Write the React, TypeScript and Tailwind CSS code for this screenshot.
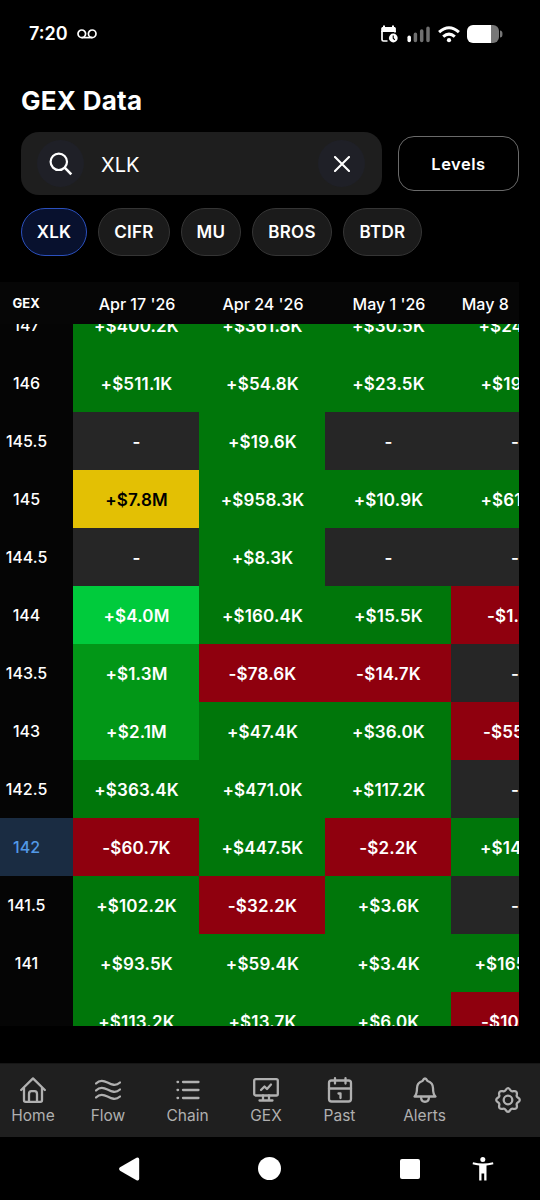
import React from "react";

const tones: Record<string, string> = {
  g: "bg-[#00760a] text-white",
  d: "bg-[#262626] text-white",
  r: "bg-[#8f000e] text-white",
  y: "bg-[#e3c004] text-black",
  b: "bg-[#00cb3c] text-white",
  m: "bg-[#029717] text-white",
};

type Row = { strike: string; active?: boolean; cells: [string, string][]; lastPad: string };

const rows: Row[] = [
  { strike: "147", cells: [["g", "+$400.2K"], ["g", "+$361.8K"], ["g", "+$30.5K"], ["g", "+$24"]], lastPad: "pl-[27.5px]" },
  { strike: "146", cells: [["g", "+$511.1K"], ["g", "+$54.8K"], ["g", "+$23.5K"], ["g", "+$19"]], lastPad: "pl-[29.5px]" },
  { strike: "145.5", cells: [["d", "-"], ["g", "+$19.6K"], ["d", "-"], ["d", "-"]], lastPad: "pl-[60px]" },
  { strike: "145", cells: [["y", "+$7.8M"], ["g", "+$958.3K"], ["g", "+$10.9K"], ["g", "+$61"]], lastPad: "pl-[29.5px]" },
  { strike: "144.5", cells: [["d", "-"], ["g", "+$8.3K"], ["d", "-"], ["d", "-"]], lastPad: "pl-[60px]" },
  { strike: "144", cells: [["b", "+$4.0M"], ["g", "+$160.4K"], ["g", "+$15.5K"], ["r", "-$1."]], lastPad: "pl-[36px]" },
  { strike: "143.5", cells: [["m", "+$1.3M"], ["r", "-$78.6K"], ["r", "-$14.7K"], ["d", "-"]], lastPad: "pl-[60px]" },
  { strike: "143", cells: [["m", "+$2.1M"], ["g", "+$47.4K"], ["g", "+$36.0K"], ["r", "-$55"]], lastPad: "pl-[32px]" },
  { strike: "142.5", cells: [["g", "+$363.4K"], ["g", "+$471.0K"], ["g", "+$117.2K"], ["d", "-"]], lastPad: "pl-[60px]" },
  { strike: "142", active: true, cells: [["r", "-$60.7K"], ["g", "+$447.5K"], ["r", "-$2.2K"], ["g", "+$14"]], lastPad: "pl-[29px]" },
  { strike: "141.5", cells: [["g", "+$102.2K"], ["r", "-$32.2K"], ["g", "+$3.6K"], ["d", "-"]], lastPad: "pl-[60px]" },
  { strike: "141", cells: [["g", "+$93.5K"], ["g", "+$59.4K"], ["g", "+$3.4K"], ["g", "+$165"]], lastPad: "pl-[23.5px]" },
  { strike: "", cells: [["g", "+$113.2K"], ["g", "+$13.7K"], ["g", "+$6.0K"], ["r", "-$10"]], lastPad: "pl-[30px]" },
];

function StatusBar() {
  return (
    <div className="flex h-[68px] shrink-0 items-center pl-[29px] pr-[37px]">
      <span className="text-[18px] font-semibold leading-none">7:20</span>
      <svg className="ml-[9px]" width="20" height="10" viewBox="0 0 20 10" fill="none" stroke="#fff" strokeWidth="1.7">
        <circle cx="4.8" cy="4.8" r="3.8" />
        <circle cx="15.2" cy="4.8" r="3.8" />
        <path d="M4.8 8.6H15.2" />
      </svg>
      <svg className="ml-auto" width="18" height="18" viewBox="0 0 18 18" fill="none">
        <path d="M2 6V14.5C2 15.5 2.5 16 3.5 16H7.5M15 6V7.5" stroke="#fff" strokeWidth="1.7" />
        <path d="M1.2 7V3.5C1.2 2.5 2 1.9 3 1.9V0.4H5V1.9H12V0.4H14V1.9C15.2 1.9 15.9 2.6 15.9 3.6V7Z" fill="#fff" />
        <circle cx="13.3" cy="13" r="4.4" fill="#fff" />
        <path d="M13.2 10.6V13.2L14.8 14.8" stroke="#000" strokeWidth="1.1" />
      </svg>
      <svg className="ml-[8px]" width="24" height="17" viewBox="0 0 24 17" strokeWidth="3.5" strokeLinecap="round">
        <path d="M3.2 11.3V14.6" stroke="#fff" />
        <path d="M9.4 8.2V14.6M15.7 5.1V14.6M22 2.2V14.6" stroke="#6f6f6f" />
      </svg>
      <svg className="ml-[8px]" width="22" height="17" viewBox="0 0 22 17" fill="none" stroke="#fff" strokeWidth="3">
        <path d="M1.1 6.2Q11-2.7 20.9 6.2" />
        <path d="M5.2 10.7Q11 5.5 16.8 10.7" />
        <circle cx="11" cy="14.2" r="2.1" fill="#fff" stroke="none" />
      </svg>
      <svg className="ml-[7px]" width="36" height="18" viewBox="0 0 36 18">
        <path d="M24 0H26A6 6 0 0 1 32 6V12A6 6 0 0 1 26 18H24Z" fill="#777" />
        <path d="M24 0H6A6 6 0 0 0 0 6V12A6 6 0 0 0 6 18H24Z" fill="#fff" />
        <path d="M33 5.5Q35.500 5.5 35.500 9Q35.500 12.5 33 12.5Z" fill="#777" />
      </svg>
    </div>
  );
}

function SearchRow() {
  return (
    <div className="mt-[16px] flex h-[63px] shrink-0 items-center gap-4 px-[21px]">
      <div className="flex h-[63px] w-[361px] items-center rounded-[18px] bg-[#1e1e1e] px-4">
        <span className="flex size-[47px] items-center justify-center rounded-full bg-[#1f2027]">
          <svg width="24" height="24" viewBox="0 0 24 24" fill="none" stroke="#fff" strokeWidth="2.2">
            <circle cx="9.8" cy="9.800" r="8.2" />
            <path d="M15.700 15.700L22.3 22.3" strokeWidth="2.6" />
          </svg>
        </span>
        <span className="ml-[17px] pt-0.5 text-[20px] leading-none">XLK</span>
        <span className="ml-auto mr-px flex size-[47px] items-center justify-center rounded-full bg-[#1f2027]">
          <svg width="16" height="16" viewBox="0 0 16 16" stroke="#fff" strokeWidth="2.1" strokeLinecap="round">
            <path d="M1 1L15 15M15 1L1 15" />
          </svg>
        </span>
      </div>
      <button className="h-[55px] w-[121px] rounded-[16px] border border-[#6a6a6a] pt-px text-[16.5px] font-semibold leading-none tracking-[0.5px]">Levels</button>
    </div>
  );
}

const chips: [string, string][] = [
  ["XLK", "w-[66px] border-[#2b50bd] bg-[#08112e]"],
  ["CIFR", "w-[72px] border-[#353535] bg-[#1b1b1b]"],
  ["MU", "w-[60px] border-[#353535] bg-[#1b1b1b]"],
  ["BROS", "w-[80px] border-[#353535] bg-[#1b1b1b]"],
  ["BTDR", "w-[79px] border-[#353535] bg-[#1b1b1b]"],
];

function GexTable() {
  return (
    <div className="mt-[26px] h-[744px] w-[519px] shrink-0 overflow-hidden bg-[#050505]">
      <div className="flex h-[42px] items-center bg-[#060606] text-[16px] font-medium leading-none">
        <span className="w-[73.5px] shrink-0 pr-[21px] text-center text-[13px] font-bold">GEX</span>
        <span className="w-[126px] shrink-0 pl-px pt-px text-center">Apr 17 '26</span>
        <span className="w-[126px] shrink-0 pl-px pt-px text-center">Apr 24 '26</span>
        <span className="w-[126px] shrink-0 pl-px pt-px text-center">May 1 '26</span>
        <span className="w-[67.5px] shrink-0 pt-px text-center">May 8</span>
      </div>
      <div className="flex h-[702px] flex-col justify-start overflow-hidden">
        <div className="-mt-7 flex flex-col">
          {rows.map((row, i) => (
            <div key={i} className="flex h-[58px] shrink-0 text-[17px] font-semibold leading-none tracking-[0.15px]">
              <div
                className={
                  "flex w-[73px] shrink-0 items-center justify-center pb-px pr-5 text-[16px] font-medium tracking-normal " +
                  (row.active ? "bg-[#1a2c42] text-[#5299e6]" : "text-white")
                }
              >
                {row.strike}
              </div>
              {row.cells.map(([tone, text], c) => (
                <div
                  key={c}
                  className={
                    "flex shrink-0 items-center overflow-hidden whitespace-nowrap pt-[2px] " +
                    tones[tone] +
                    " " +
                    (c < 3 ? "w-[126px] justify-center pl-px" : "w-[68px] " + row.lastPad)
                  }
                >
                  {text}
                </div>
              ))}
            </div>
          ))}
        </div>
      </div>
    </div>
  );
}

const icons = {
  home: (
    <>
      <path d="M1.2 13L13 1.4 24.800 13" />
      <path d="M4 11V23.2Q4 24.8 5.6 24.8H20.400Q22 24.8 22 23.2V11" />
      <path d="M9 24.5V17Q9 14.2 11.400 14.2H14.6Q17 14.2 17 17V24.5" />
    </>
  ),
  flow: (
    <path d="M1 6.500C5 2.5 8.5 3.5 12.5 5.500S20.500 9.500 25 5.500M1 13.500C5 9.500 8.500 10.500 12.500 12.500S20.500 16.500 25 12.500M1 20.500C5 16.500 8.500 17.500 12.500 19.500S20.500 23.500 25 19.500" />
  ),
  chain: <path d="M8 5H23.500M8 13H23.500M8 21H23.500M2.500 5H3.100M2.500 13H3.100M2.500 21H3.100" />,
  gex: (
    <>
      <rect x="1.200" y="2.200" width="23.600" height="16.300" rx="1.500" />
      <path d="M10 18.500V22.500M16 18.500V22.500M6.500 23.500H19.500M8 13L11.500 9.500 14 12 18 7.500" />
    </>
  ),
  past: (
    <>
      <rect x="2" y="3.500" width="22" height="21" rx="2.500" />
      <path d="M2 11.500H24M8 1.200V6.500M18.500 1.200V6.500M11.500 16.500H13.500V21" />
    </>
  ),
  alerts: (
    <>
      <path d="M2.500 19.500C4.800 17.500 5 15 5 11C5 7 7.500 5 10.500 4Q13-1 15.500 4C18.500 5 21 7 21 11C21 15 21.200 17.500 23.500 19.500Z" />
      <path d="M9 20C9.200 26.300 16.800 26.300 17 20" />
    </>
  ),
};

const tabs: [keyof typeof icons, string, string][] = [
  ["home", "Home", "w-[66px]"],
  ["flow", "Flow", "w-[84px]"],
  ["chain", "Chain", "w-[75px]"],
  ["gex", "GEX", "w-[82px]"],
  ["past", "Past", "w-[65px]"],
  ["alerts", "Alerts", "w-[105px]"],
];

function TabBar() {
  return (
    <nav className="mt-[37px] flex h-[74px] shrink-0 border-t border-[#161616] bg-[#1f1f1f] text-[#b0b0b0]">
      {tabs.map(([icon, label, width]) => (
        <div key={icon} className={"flex shrink-0 flex-col items-center pt-[13px] " + width}>
          <svg width="26" height="26" viewBox="0 0 26 26" fill="none" stroke="currentColor" strokeWidth="2.3" strokeLinecap="round" strokeLinejoin="round">
            {icons[icon]}
          </svg>
          <span className="mt-[5px] text-[15.500px] leading-4">{label}</span>
        </div>
      ))}
      <div className="flex flex-1 items-center justify-center pb-px pr-px">
        <svg width="26" height="26" viewBox="0 0 26 26" fill="none" stroke="currentColor" strokeWidth="2.3" strokeLinejoin="round">
          <circle cx="13" cy="13" r="4.300" />
          <path d="M10.600 3.200Q13-0.800 15.400 3.200Q16.500 4.800 18.200 4.200Q22.600 3.400 21.800 7.800Q21.200 9.500 22.800 10.600Q26.800 13 22.800 15.400Q21.200 16.500 21.800 18.200Q22.600 22.600 18.200 21.800Q16.500 21.200 15.400 22.800Q13 26.800 10.600 22.800Q9.500 21.200 7.800 21.800Q3.400 22.600 4.200 18.200Q4.800 16.500 3.200 15.400Q-0.800 13 3.200 10.600Q4.800 9.500 4.200 7.800Q3.400 3.400 7.800 4.200Q9.500 4.800 10.600 3.200Z" />
        </svg>
      </div>
    </nav>
  );
}

function SystemNav() {
  return (
    <div className="flex h-[63px] shrink-0 items-center pl-[119px]">
      <svg width="21" height="24" viewBox="0 0 21 24" fill="#fff">
        <path d="M1 10.300L17.500 0.700Q20.200-0.300 20.200 2.500V21.500Q20.200 24.300 17.500 23.300L1 13.700Q-0.800 12 1 10.300Z" />
      </svg>
      <span className="ml-[118px] size-[23px] rounded-full bg-white" />
      <span className="ml-[119px] size-[20px] rounded-[2px] bg-white" />
      <svg className="ml-[52px]" width="22" height="24" viewBox="0 0 22 24" fill="#fff">
        <circle cx="10.800" cy="2.600" r="2.500" />
        <path d="M1 5.200Q11 7.800 21 5.200L21.400 7.200Q18 8.200 14.500 8.500V23.500H12.200V16.500H9.500V23.500H7.200V8.500Q4 8.200 0.600 7.200Z" />
      </svg>
    </div>
  );
}

export default function App() {
  return (
    <div className="flex h-[1200px] w-[540px] flex-col overflow-hidden bg-black font-['Inter',sans-serif] text-white">
      <StatusBar />
      <h1 className="mt-[16px] h-[32px] shrink-0 pl-[21px] pt-px text-[26px] font-bold leading-8 tracking-[0.25px]">GEX Data</h1>
      <SearchRow />
      <div className="mt-[13px] flex h-[48px] shrink-0 gap-[11px] pl-[21px]">
        {chips.map(([label, style]) => (
          <span key={label} className={"flex h-[48px] items-center justify-center rounded-full border-[1.5px] text-[17px] font-semibold leading-none tracking-[0.3px] " + style}>
            {label}
          </span>
        ))}
      </div>
      <GexTable />
      <TabBar />
      <SystemNav />
    </div>
  );
}
